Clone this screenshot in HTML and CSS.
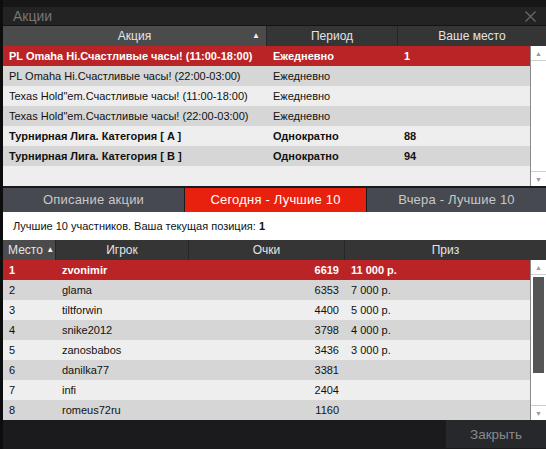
FILE: index.html
```html
<!DOCTYPE html>
<html lang="ru">
<head>
<meta charset="utf-8">
<title>Акции</title>
<link rel="stylesheet" href="styles.css">
</head>
<body>
<div class="app">
  <div class="edge"></div>
  <div class="window">
    <div class="topstrip"></div>
    <div class="titlebar">
      <span class="title">Акции</span>
      <svg class="close-x" width="11" height="11" viewBox="0 0 11 11"><path d="M0.5 0.5 L10.5 10.5 M10.5 0.5 L0.5 10.5" stroke="#6a6a6a" stroke-width="1.2" fill="none"/></svg>
    </div>

    <div class="promo">
      <div class="thead promo-cols">
        <div class="th sorted center">Акция<span class="arrow right">&#9650;</span></div>
        <div class="th center">Период</div>
        <div class="th center">Ваше место</div>
      </div>
      <div class="tbody-wrap promo-body">
        <div class="rows">
          <div class="row promo-cols sel"><div class="td">PL Omaha Hi.Счастливые часы! (11:00-18:00)</div><div class="td">Ежедневно</div><div class="td">1</div></div>
          <div class="row promo-cols dark"><div class="td">PL Omaha Hi.Счастливые часы! (22:00-03:00)</div><div class="td">Ежедневно</div><div class="td"></div></div>
          <div class="row promo-cols light"><div class="td">Texas Hold"em.Счастливые часы! (11:00-18:00)</div><div class="td">Ежедневно</div><div class="td"></div></div>
          <div class="row promo-cols dark"><div class="td">Texas Hold"em.Счастливые часы! (22:00-03:00)</div><div class="td">Ежедневно</div><div class="td"></div></div>
          <div class="row promo-cols light bold"><div class="td">Турнирная Лига. Категория [ A ]</div><div class="td">Однократно</div><div class="td">88</div></div>
          <div class="row promo-cols dark bold"><div class="td">Турнирная Лига. Категория [ B ]</div><div class="td">Однократно</div><div class="td">94</div></div>
          <div class="row light empty"></div>
        </div>
        <div class="scrollbar">
          <div class="sb-btn up"><span>&#9650;</span></div>
          <div class="sb-track"></div>
          <div class="sb-btn down"><span>&#9660;</span></div>
        </div>
      </div>
    </div>

    <div class="tabs">
      <div class="tab">Описание акции</div>
      <div class="tab active">Сегодня - Лучшие 10</div>
      <div class="tab">Вчера - Лучшие 10</div>
    </div>

    <div class="info">Лучшие 10 участников. Ваша текущая позиция: <b>1</b></div>

    <div class="leaders">
      <div class="thead lead-cols">
        <div class="th sorted left">Место <span class="arrow">&#9650;</span></div>
        <div class="th center">Игрок</div>
        <div class="th center">Очки</div>
        <div class="th center">Приз</div>
      </div>
      <div class="tbody-wrap lead-body">
        <div class="rows">
          <div class="row lead-cols sel"><div class="td">1</div><div class="td">zvonimir</div><div class="td num">6619</div><div class="td">11 000 р.</div></div>
          <div class="row lead-cols dark"><div class="td">2</div><div class="td">glama</div><div class="td num">6353</div><div class="td">7 000 р.</div></div>
          <div class="row lead-cols light"><div class="td">3</div><div class="td">tiltforwin</div><div class="td num">4400</div><div class="td">5 000 р.</div></div>
          <div class="row lead-cols dark"><div class="td">4</div><div class="td">snike2012</div><div class="td num">3798</div><div class="td">4 000 р.</div></div>
          <div class="row lead-cols light"><div class="td">5</div><div class="td">zanosbabos</div><div class="td num">3436</div><div class="td">3 000 р.</div></div>
          <div class="row lead-cols dark"><div class="td">6</div><div class="td">danilka77</div><div class="td num">3381</div><div class="td"></div></div>
          <div class="row lead-cols light"><div class="td">7</div><div class="td">infi</div><div class="td num">2404</div><div class="td"></div></div>
          <div class="row lead-cols dark"><div class="td">8</div><div class="td">romeus72ru</div><div class="td num">1160</div><div class="td"></div></div>
        </div>
        <div class="scrollbar">
          <div class="sb-btn up"><span>&#9650;</span></div>
          <div class="sb-track"><div class="sb-thumb"></div></div>
          <div class="sb-btn down"><span>&#9660;</span></div>
        </div>
      </div>
    </div>

    <div class="footer">
      <button class="close-btn">Закрыть</button>
    </div>
  </div>
</div>
</body>
</html>
```

FILE: styles.css
```css
* { box-sizing: border-box; }
html, body { margin: 0; padding: 0; background: #121212; }
body { width: 546px; height: 449px; overflow: hidden; font-family: "Liberation Sans", Arial, sans-serif; }

.app { display: flex; width: 546px; height: 449px; }
.edge { width: 3px; background: #0d0d0d; flex: none; }
.window { flex: 1; display: flex; flex-direction: column; background: #1b1b1d; }

.topstrip { height: 7px; background: #161616; }
.titlebar {
  height: 19px; background: #232323; display: flex; align-items: center;
  justify-content: space-between; padding: 0 10px 0 10px; border-bottom: 1px solid #141414;
}
.title { color: #767676; font-size: 14px; }
.close-x { display: block; }

/* tables */
.promo-cols { display: grid; grid-template-columns: 264px 131px 1fr; }
.lead-cols { display: grid; grid-template-columns: 53px 133px 156px 1fr; }

.thead { height: 20px; background: #353535; }
.th {
  color: #e4e4e4; font-size: 12px; line-height: 20px; border-right: 1px solid #262626;
  white-space: nowrap; position: relative;
}
.th:last-child { border-right: none; }
.th.sorted { background: #4b4b4b; }
.th.center { text-align: center; }
.th.left { padding-left: 5px; }
.arrow { font-size: 8px; vertical-align: 2px; color: #f0f0f0; }
.arrow.right { position: absolute; right: 6px; top: 0; }

.tbody-wrap { display: flex; }
.promo-body { height: 140px; }
.lead-body { height: 160px; }
.rows { flex: 1; display: flex; flex-direction: column; }
.row { height: 20px; font-size: 11px; color: #111; flex: none; }
.row.empty { height: 20px; }
.row.dark { background: #d6d6d6; }
.row.light { background: #eeeeee; }
.row.sel { background: #bb2427; color: #fff; font-weight: bold; }
.row.bold { font-weight: bold; }
.td { padding: 0 6px; line-height: 20px; white-space: nowrap; overflow: hidden; }
.td.num { text-align: right; }

.scrollbar {
  width: 16px; flex: none; background: #fff; border-left: 1px solid #8a8a8a;
  display: flex; flex-direction: column;
}
.sb-btn { height: 15px; display: flex; align-items: center; justify-content: center; font-size: 7px; color: #9a9a9a; }
.sb-btn.up { border-bottom: 1px solid #cfcfcf; }
.sb-btn.down { border-top: 1px solid #cfcfcf; }
.sb-track { flex: 1; padding: 2px 2px 0 2px; }
.sb-thumb { height: 96px; background: #555555; }

/* tabs */
.tabs { display: grid; grid-template-columns: 181px 181px 1fr; margin-top: 2px; height: 24px; gap: 1px; background: #1b1b1d; }
.tab { background: #464a50; color: #c8c8c8; font-size: 13px; letter-spacing: 0.2px; line-height: 24px; text-align: center; }
.tab.active { background: #e8200e; color: #fff; }

.info { background: #fff; height: 28px; font-size: 11px; color: #111; line-height: 28px; padding-left: 10px; }

.footer { flex: 1; display: flex; justify-content: flex-end; align-items: stretch; padding-bottom: 1px; }
.close-btn {
  width: 100px; border: none; background: #26282c; color: #8a8a8a; font-family: "Liberation Sans", Arial, sans-serif;
  font-size: 13.5px; padding: 0;
}
```
